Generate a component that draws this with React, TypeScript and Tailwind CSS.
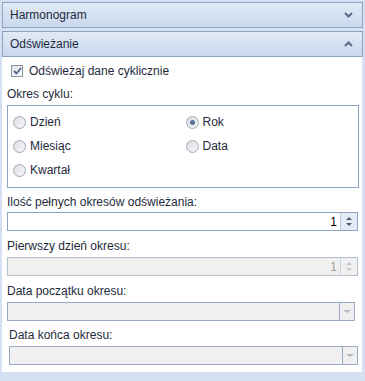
import React from "react";

const font = { fontFamily: '"Liberation Sans", Arial, sans-serif' };

function Chevron({ up }: { up?: boolean }) {
  return (
    <svg width="9" height="6" viewBox="0 0 9 6" className="text-[#5a6b85]">
      {up ? (
        <path d="M1 5 L4.5 1.5 L8 5" fill="none" stroke="currentColor" strokeWidth="2" />
      ) : (
        <path d="M1 1 L4.5 4.5 L8 1" fill="none" stroke="currentColor" strokeWidth="2" />
      )}
    </svg>
  );
}

function Header({ title, open }: { title: string; open?: boolean }) {
  return (
    <div className="flex h-[26px] items-center justify-between border border-[#8ea3c1] bg-gradient-to-b from-[#e1eaf6] to-[#c8d8ed] pl-[7px] pr-[9px] text-[12px] text-[#1e2a3c]">
      <span>{title}</span>
      <Chevron up={open} />
    </div>
  );
}

function Radio({ label, checked }: { label: string; checked?: boolean }) {
  return (
    <div className="flex h-[24px] items-center gap-[4px]">
      <span className="flex h-[13px] w-[13px] items-center justify-center rounded-full border border-[#a3aab5] bg-gradient-to-br from-[#dcdfe3] to-[#f5f6f7]">
        {checked && <span className="h-[5px] w-[5px] rounded-full bg-[#5a7396]" />}
      </span>
      <span>{label}</span>
    </div>
  );
}

function Spin({ disabled }: { disabled?: boolean }) {
  return (
    <div
      className={`flex h-[19px] border ${
        disabled ? "border-[#b4bfcf] bg-[#f0f0f0] text-[#a0a0a0]" : "border-[#8ea3c1] bg-white text-black"
      }`}
    >
      <div className="flex flex-1 items-center justify-end pr-[3px]">1</div>
      <div
        className={`flex w-[17px] flex-col items-center justify-center gap-[3px] border-l ${
          disabled ? "border-[#cbd3de]" : "border-[#b9c7da] bg-[#e3ebf6]"
        }`}
      >
        <span className={`h-0 w-0 border-x-[3px] border-b-[3px] border-x-transparent ${disabled ? "border-b-[#c5c9cf]" : "border-b-[#505a66]"}`} />
        <span className={`h-0 w-0 border-x-[3px] border-t-[3px] border-x-transparent ${disabled ? "border-t-[#c5c9cf]" : "border-t-[#505a66]"}`} />
      </div>
    </div>
  );
}

function Combo({ className }: { className?: string }) {
  return (
    <div className={`flex h-[19px] border border-[#9aaac3] bg-[#f0f0f0] ${className ?? ""}`}>
      <div className="flex-1" />
      <div className="flex w-[15px] items-center justify-center border-l border-[#9aaac3]">
        <span className="h-0 w-0 border-x-[4px] border-t-[3px] border-x-transparent border-t-[#b0b8c4]" />
      </div>
    </div>
  );
}

export default function App() {
  return (
    <div style={font} className="h-[381px] w-[365px] bg-[#d5e1f2] pl-[2px] pr-[2px] pt-[2px] text-[12px] text-[#1e2a3c]">
      <Header title="Harmonogram" />
      <div className="mt-[3px]">
        <Header title="Odświeżanie" open />
      </div>
      <div className="h-[315px] w-[360px] bg-white pl-[5px] pr-[3px] pt-[7px]">
        <div className="flex h-[14px] items-center gap-[6px] pl-[4px]">
          <span className="flex h-[12px] w-[12px] items-center justify-center border border-[#8e959e] bg-gradient-to-br from-[#e2e5e9] to-[#f7f8f9]">
            <svg width="9" height="8" viewBox="0 0 9 8">
              <path d="M1 4 L3.5 6.5 L8 1" fill="none" stroke="#4a6592" strokeWidth="1.8" />
            </svg>
          </span>
          <span>Odświeżaj dane cyklicznie</span>
        </div>
        <div className="mt-[8px] h-[16px] leading-[16px]">Okres cyklu:</div>
        <div className="mt-[3px] grid h-[83px] grid-cols-2 border border-[#8ea3c1] pl-[5px] pt-[4px]">
          <div>
            <Radio label="Dzień" />
            <Radio label="Miesiąc" />
            <Radio label="Kwartał" />
          </div>
          <div>
            <Radio label="Rok" checked />
            <Radio label="Data" />
          </div>
        </div>
        <div className="mt-[6px] h-[16px] leading-[16px]">Ilość pełnych okresów odświeżania:</div>
        <div className="mt-[2px] w-[351px]">
          <Spin />
        </div>
        <div className="mt-[7px] h-[16px] leading-[16px]">Pierwszy dzień okresu:</div>
        <div className="mt-[3px] w-[351px]">
          <Spin disabled />
        </div>
        <div className="mt-[7px] h-[16px] leading-[16px]">Data początku okresu:</div>
        <Combo className="mt-[3px] w-[348px]" />
        <div className="mt-[6px] h-[16px] pl-[2px] leading-[16px]">Data końca okresu:</div>
        <Combo className="mt-[3px] ml-[2px] w-[349px]" />
      </div>
    </div>
  );
}
